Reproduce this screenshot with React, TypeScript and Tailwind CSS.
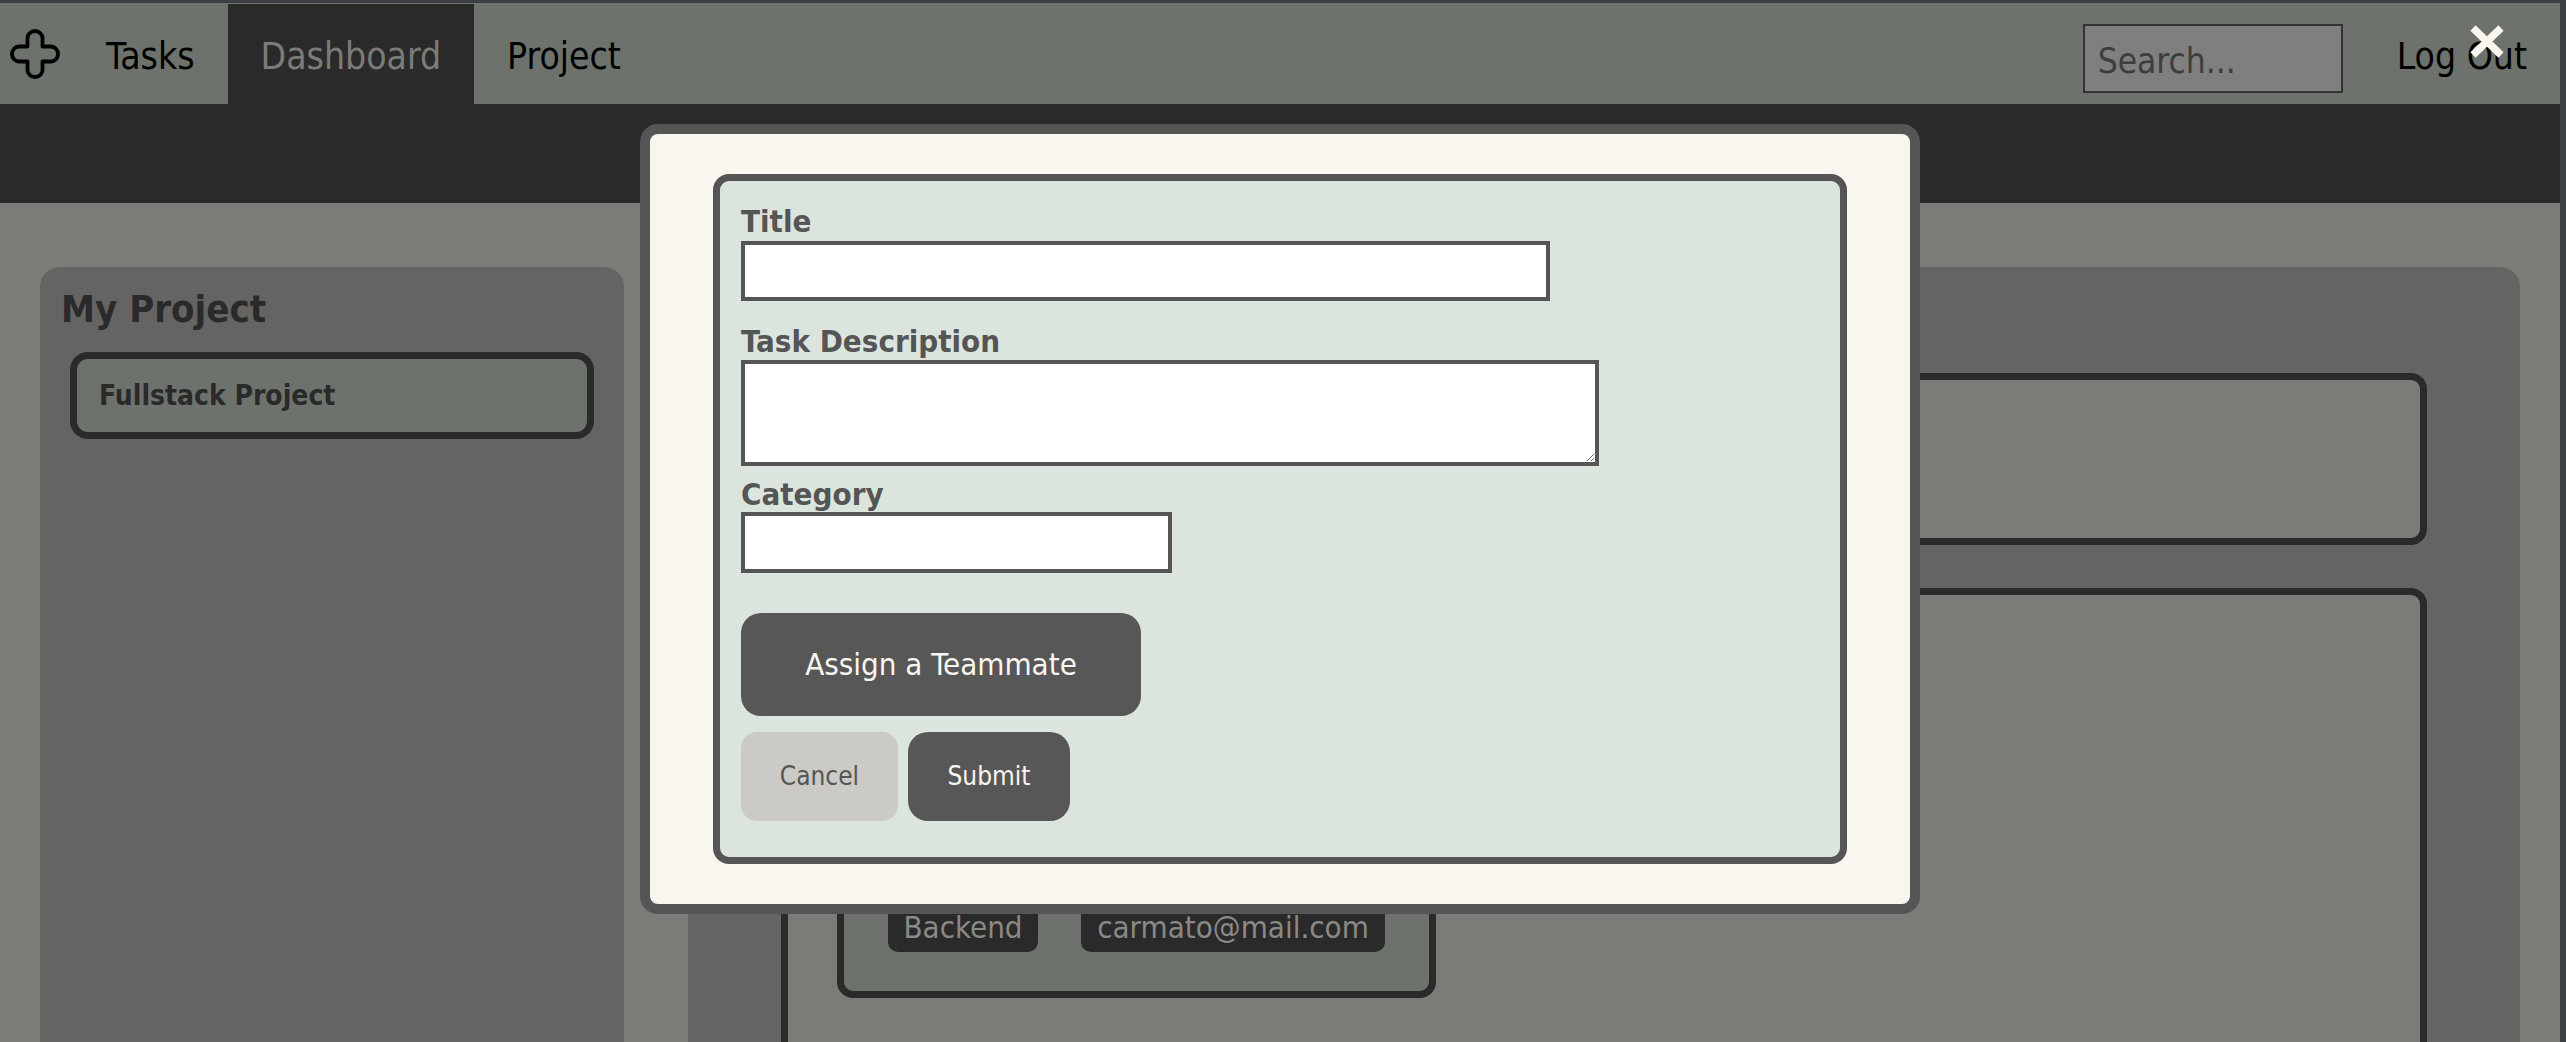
import React from "react";

const PlusIcon = () => (
  <svg width="50" height="50" viewBox="0 0 50 50" fill="none">
    <path
      d="M17.5 9 A7.5 7 0 0 1 32.5 9 V17.5 H41 A7 7.5 0 0 1 41 32.5 H32.5 V41 A7.5 7 0 0 1 17.5 41 V32.5 H9 A7 7.5 0 0 1 9 17.5 H17.5 Z"
      stroke="#000"
      strokeWidth="3.8"
      strokeLinejoin="round"
    />
  </svg>
);

const CloseIcon = () => (
  <svg width="34" height="33" viewBox="0 0 34 33">
    <path d="M3 3 L31 30 M31 3 L3 30" stroke="#f9f6ef" strokeWidth="7.5" />
  </svg>
);

export default function App() {
  const font = "font-['DejaVu_Sans_Condensed','DejaVu_Sans',sans-serif] [font-stretch:condensed]";
  return (
    <div className={`relative flex h-[1042px] w-full overflow-hidden bg-[#7c7b77] ${font}`}>
      <div className="flex min-w-0 flex-1 flex-col">
        <div className="h-[3px] shrink-0 bg-[#3c3f44]" />
        <nav className="flex h-[101px] shrink-0 items-stretch bg-[#6d726d]">
          <div className="ml-[10px] mr-[13px] flex items-center">
            <PlusIcon />
          </div>
          <a className="flex items-center px-[33px] pt-[5px] text-[37px] leading-none text-black">Tasks</a>
          <a className="mt-[1px] flex items-center bg-[#2a2a2a] px-[33px] pt-[4px] text-[37px] leading-none text-[#7c7b77]">
            Dashboard
          </a>
          <a className="flex items-center px-[33px] pt-[5px] text-[37px] leading-none text-black">Project</a>
          <div className="flex-1" />
          <div className="flex items-start pt-[21px]">
            <input
              placeholder="Search..."
              className="h-[69px] w-[260px] border-2 border-[#333333] bg-[#7f7f7f] px-[13px] pt-[4px] text-[35px] text-[#3d3d3d] outline-none placeholder:text-[#3d3d3d]"
            />
          </div>
          <a className="ml-[21px] flex items-center px-[33px] pt-[5px] text-[37px] leading-none text-black">Log Out</a>
        </nav>
        <div className="h-[99px] shrink-0 bg-[#2a2a2a]" />
        <main className="flex shrink-0 gap-[64px] px-[40px] pt-[64px]">
          <section className="h-[900px] w-[584px] shrink-0 rounded-t-[20px] bg-[#656462] pt-[20px]">
            <h2 className="pl-[21px] text-[38px] font-bold leading-[44px] text-[#2a2a2a]">My Project</h2>
            <div className="mx-[30px] mt-[21px] flex h-[87px] items-center rounded-[18px] border-[7px] border-[#2a2a2a] bg-[#6d726d] pl-[22px]">
              <span className="text-[28px] font-bold text-[#2a2a2a]">Fullstack Project</span>
            </div>
          </section>
          <section className="h-[900px] flex-1 rounded-t-[20px] bg-[#656462] px-[93px] pt-[106px]">
            <div className="h-[172px] rounded-[16px] border-[7px] border-[#2a2a2a] bg-[#7c7b77]" />
            <div className="mt-[43px] h-[700px] rounded-[16px] border-[7px] border-[#2a2a2a] bg-[#7c7b77] pl-[49px] pt-[98px]">
              <div className="flex h-[305px] w-[599px] items-end gap-[43px] rounded-[16px] border-[7px] border-[#2a2a2a] bg-[#6d726d] pb-[39px] pl-[44px]">
                <span className="flex h-[60px] w-[150px] items-end justify-center rounded-[10px] bg-[#2a2a2a] pb-[9px] text-[31px] leading-none text-[#8a8985]">
                  Backend
                </span>
                <span className="flex h-[60px] w-[304px] items-end justify-center rounded-[10px] bg-[#2a2a2a] pb-[9px] text-[31px] leading-none text-[#8a8985]">
                  carmato@mail.com
                </span>
              </div>
            </div>
          </section>
        </main>
      </div>
      <div className="w-[6px] shrink-0 bg-[#3c3f44]" />

      {/* Modal overlay */}
      <div className="absolute inset-y-0 left-0 right-[6px] flex justify-center pt-[124px]">
        <div className="h-fit w-[1280px] rounded-[18px] border-[10px] border-[#555555] bg-[#f9f6ef] px-[63px] py-[40px]">
          <form className="flex flex-col items-start rounded-[16px] border-[7px] border-[#555555] bg-[#dbe5de] pb-[36px] pl-[21px] pt-[23px]">
            <label className="text-[31px] font-bold leading-[35px] text-[#555555]">Title</label>
            <input className="mt-[2px] h-[60px] w-[809px] border-4 border-[#555555] bg-white outline-none" />
            <label className="mt-[23px] text-[31px] font-bold leading-[35px] text-[#555555]">Task Description</label>
            <textarea className="mt-[1px] block h-[106px] w-[858px] border-4 border-[#555555] bg-white outline-none" />
            <label className="mt-[11px] text-[31px] font-bold leading-[35px] text-[#555555]">Category</label>
            <input className="h-[61px] w-[431px] border-4 border-[#555555] bg-white outline-none" />
            <button
              type="button"
              className="mt-[40px] h-[103px] w-[400px] rounded-[20px] bg-[#575757] text-[31px] text-[#f9f6ef]"
            >
              Assign a Teammate
            </button>
            <div className="mt-[16px] flex gap-[10px]">
              <button
                type="button"
                className="h-[89px] w-[157px] rounded-[16px] bg-[#cccac6] text-[26px] text-[#555555]"
              >
                Cancel
              </button>
              <button
                type="button"
                className="h-[89px] w-[162px] rounded-[20px] bg-[#575757] text-[26px] text-[#f9f6ef]"
              >
                Submit
              </button>
            </div>
          </form>
        </div>
      </div>
      <button type="button" className="absolute right-[62px] top-[25px]">
        <CloseIcon />
      </button>
    </div>
  );
}
